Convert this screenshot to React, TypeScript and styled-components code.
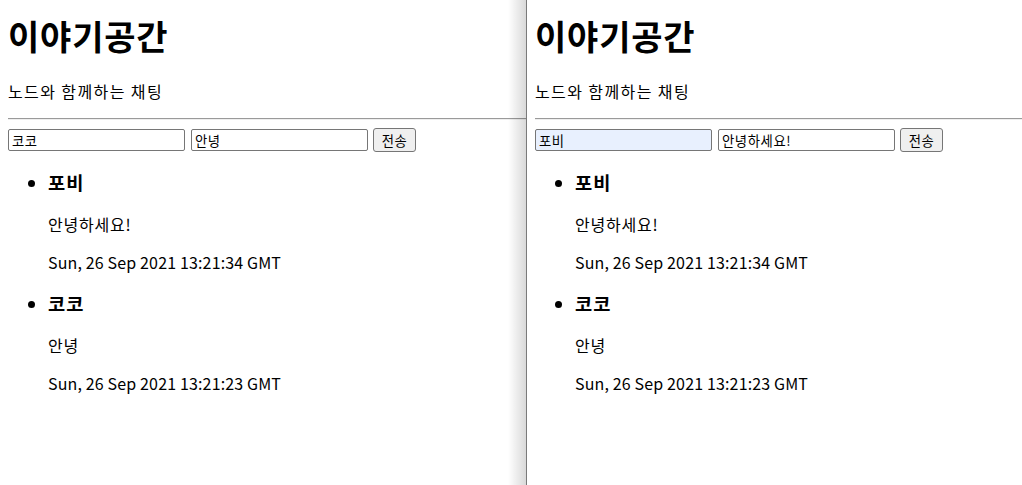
import React from 'react';
import styled, { createGlobalStyle } from 'styled-components';

const GlobalStyle = createGlobalStyle`
  html, body {
    margin: 0;
    padding: 0;
    background: #ffffff;
  }
  body {
    font-family: "Noto Sans CJK KR", "Noto Sans", sans-serif;
    color: #000000;
    overflow: hidden;
  }
`;

const Desktop = styled.div`
  display: flex;
  width: 1022px;
  height: 485px;
  overflow: hidden;
`;

const Window = styled.div<{ $edge?: boolean }>`
  position: relative;
  box-sizing: border-box;
  flex: ${(p) => (p.$edge ? '0 0 527px' : '1 1 auto')};
  min-width: 0;
  padding: 0 0 0 8px;
  overflow: hidden;
  border-right: ${(p) => (p.$edge ? '1px solid #7a7a7a' : 'none')};

  &::after {
    content: '';
    display: ${(p) => (p.$edge ? 'block' : 'none')};
    position: absolute;
    top: 0;
    right: 0;
    bottom: 0;
    width: 18px;
    background: linear-gradient(to right, rgba(0, 0, 0, 0), rgba(0, 0, 0, 0.15));
    pointer-events: none;
  }
`;

const Title = styled.h1`
  font-size: 34px;
  line-height: 40px;
  font-weight: 700;
  letter-spacing: 0.8px;
  margin: 16px 0 0;
`;

const Subtitle = styled.p`
  font-size: 16px;
  line-height: 22px;
  letter-spacing: 1.4px;
  margin: 24px 0 0;
`;

const Rule = styled.hr`
  margin: 16px 0 0;
  height: 0;
  border: none;
  border-top: 1px solid #9a9a9a;
  border-bottom: 1px solid #eeeeee;
`;

const Form = styled.form`
  display: flex;
  align-items: center;
  margin-top: 8px;
  height: 24px;
`;

const TextInput = styled.input<{ $filled?: boolean }>`
  box-sizing: border-box;
  width: 177px;
  height: 22px;
  margin-right: 6px;
  padding: 1px 3px;
  font-family: "Noto Sans CJK KR", sans-serif;
  font-size: 13.33px;
  letter-spacing: 0.6px;
  color: #000;
  border: 1px solid #767676;
  border-radius: 2px;
  background: ${(p) => (p.$filled ? '#e8f0fe' : '#ffffff')};
  outline: none;
`;

const SendButton = styled.button`
  box-sizing: border-box;
  height: 24px;
  width: 43px;
  margin-left: -1px;
  padding: 0 6px;
  font-family: "Noto Sans CJK KR", sans-serif;
  font-size: 13.33px;
  letter-spacing: 0.6px;
  color: #000;
  background: #efefef;
  border: 1px solid #767676;
  border-radius: 3px;
`;

const Messages = styled.ul`
  margin: 18px 0 0;
  padding-left: 40px;
  list-style: disc;
`;

const Message = styled.li`
  &::marker {
    font-size: 17px;
  }
`;

const Sender = styled.h3`
  font-size: 18.72px;
  line-height: 24px;
  font-weight: 700;
  letter-spacing: 1px;
  margin: 0 0 18.72px;
  li + li & {
    margin-top: 18.72px;
  }
`;

const Line = styled.p<{ $latin?: boolean }>`
  font-size: 16px;
  line-height: 22px;
  letter-spacing: ${(p) => (p.$latin ? '0.15px' : '0.8px')};
  margin: 16px 0 0;
  &:nth-of-type(1) {
    margin-top: 0;
  }
`;

type Chat = { name: string; text: string; date: string };

const chats: Chat[] = [
  { name: '포비', text: '안녕하세요!', date: 'Sun, 26 Sep 2021 13:21:34 GMT' },
  { name: '코코', text: '안녕', date: 'Sun, 26 Sep 2021 13:21:23 GMT' },
];

function ChatWindow({ name, message, edge, filled }: { name: string; message: string; edge?: boolean; filled?: boolean }) {
  return (
    <Window $edge={edge}>
      <Title>이야기공간</Title>
      <Subtitle>노드와 함께하는 채팅</Subtitle>
      <Rule />
      <Form onSubmit={(e) => e.preventDefault()}>
        <TextInput $filled={filled} defaultValue={name} />
        <TextInput defaultValue={message} />
        <SendButton type="submit">전송</SendButton>
      </Form>
      <Messages>
        {chats.map((c) => (
          <Message key={c.date}>
            <Sender>{c.name}</Sender>
            <Line>{c.text}</Line>
            <Line $latin>{c.date}</Line>
          </Message>
        ))}
      </Messages>
    </Window>
  );
}

export default function App() {
  return (
    <>
      <GlobalStyle />
      <Desktop>
        <ChatWindow name="코코" message="안녕" edge />
        <ChatWindow name="포비" message="안녕하세요!" filled />
      </Desktop>
    </>
  );
}
